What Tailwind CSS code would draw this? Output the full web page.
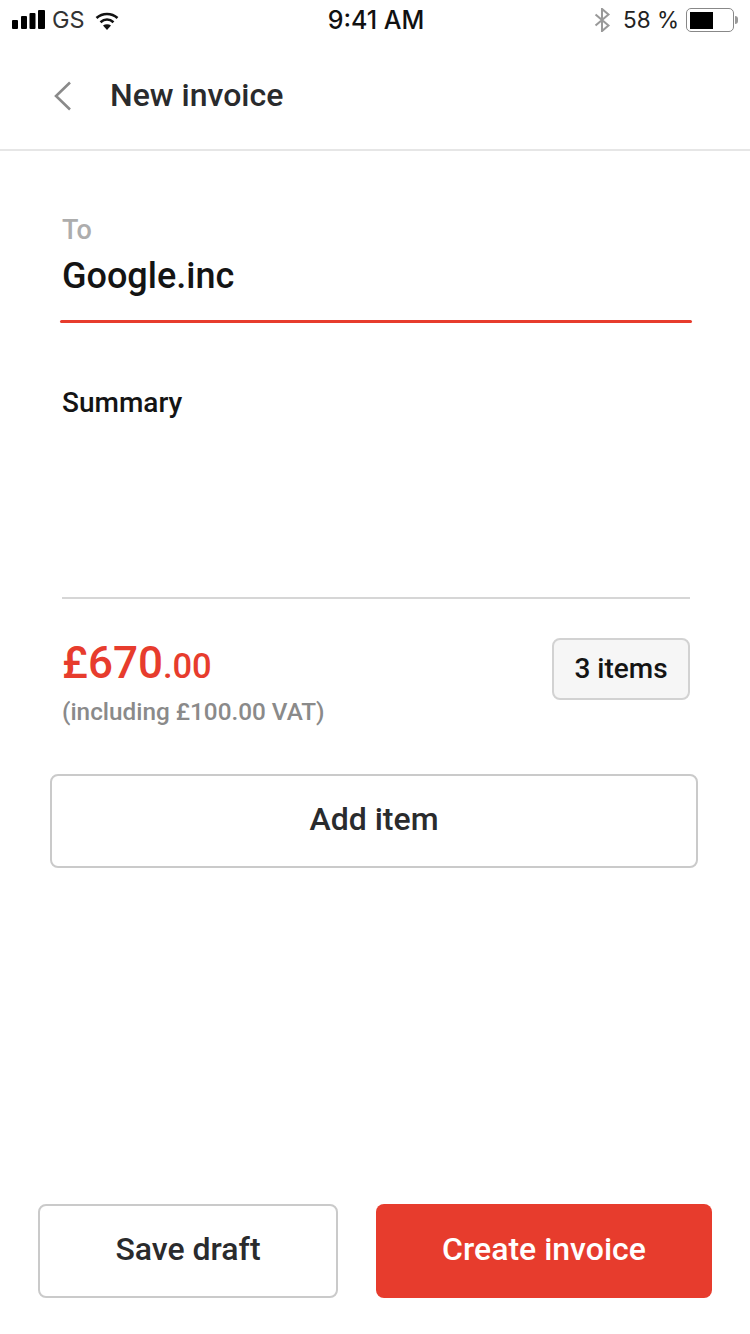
<!DOCTYPE html>
<html lang="en">

<head>
  <meta charset="UTF-8" />
  <meta name="viewport" content="width=device-width, initial-scale=1.0" />
  <title>New invoice</title>
  <script src="https://cdn.jsdelivr.net/npm/@tailwindcss/browser@4"></script>
</head>

<body class="bg-white font-['Roboto',sans-serif] w-[750px] h-[1334px] overflow-hidden flex flex-col">
  <!-- status bar -->
  <div class="h-[40px] pl-[12px] pr-[12px] grid grid-cols-[1fr_auto_1fr] items-center font-['Inter',sans-serif] text-[#111]">
    <div class="flex items-center">
      <svg width="33" height="20" viewBox="0 0 33 20" fill="#000">
        <rect x="0" y="10" width="6" height="9" rx="1" />
        <rect x="9" y="6" width="6" height="13" rx="1" />
        <rect x="17.500" y="3" width="6" height="16" rx="1" />
        <rect x="26" y="0" width="7" height="19" rx="1" />
      </svg>
      <span class="ml-[7px] text-[23.500px] text-[#333]">GS</span>
      <svg width="24" height="18" viewBox="0 0 24 18" fill="none" stroke="#111" stroke-width="2.600" class="ml-[10px] mt-[1px]">
        <path d="M1.500 6C7.500 .6 16.500 .6 22.500 6" />
        <path d="M5.500 10.200C9.500 6.800 14.500 6.800 18.500 10.200" />
        <path d="M12 18L8 13.600c2.300-1.700 5.700-1.700 8 0z" fill="#111" stroke="none" />
      </svg>
    </div>
    <div class="text-center text-[25px] font-medium pl-[2px] pt-[2px]">9:41 AM</div>
    <div class="flex items-center justify-end">
      <svg width="18" height="24" viewBox="0 0 18 26" fill="none" stroke="#999" stroke-width="2.200" class="ml-[1px]">
        <path d="M2 7l14 12-7 6V1l7 6L2 19" />
      </svg>
      <span class="text-[22.500px] ml-[12px] text-[#222]">58 %</span>
      <div class="ml-[7px] w-[48px] h-[24px] border-[1.500px] border-[#888] rounded-[5px] p-[2.500px]">
        <div class="w-[23px] h-full bg-black"></div>
      </div>
      <div class="w-[3px] h-[8px] bg-[#999] rounded-r-full ml-[1px]"></div>
    </div>
  </div>

  <!-- header -->
  <div class="h-[111px] border-b-2 border-[#e6e6e6] flex items-center pl-[54px] pt-[2px]">
    <svg width="18" height="30" viewBox="0 0 18 30" fill="none" stroke="#8a8a8a" stroke-width="2.600">
      <path d="M16 1.500L2 15l14 13.500" />
    </svg>
    <h1 class="ml-[38px] mb-[2px] text-[32px] font-[465] text-[#2a2b2d]">New invoice</h1>
  </div>

  <!-- form -->
  <div class="px-[60px] pt-[63px]">
    <div class="pl-[2px] text-[27px] leading-[32px] font-[465] text-[#adadad]">To</div>
    <div class="pl-[2px] mt-[9px] text-[36px] leading-[42px] font-[465] text-[#141414]">Google.inc</div>
    <div class="mt-[23px] w-[632px] h-[3px] bg-[#e73c2d] rounded-full"></div>
    <div class="pl-[2px] mt-[63px] text-[28px] leading-[34px] font-[465] text-[#141414]">Summary</div>
    <div class="ml-[2px] mt-[177px] w-[628px] h-[2px] bg-[#d6d6d6]"></div>
  </div>

  <div class="pl-[62px] pr-[60px] mt-[39px] flex justify-between items-start">
    <div>
      <div class="text-[#e73c2d] font-medium leading-[50px] text-[44px]">£670<span class="text-[34.500px] font-[465]">.00</span></div>
      <div class="mt-[5px] text-[24.300px] leading-[32px] font-[465] text-[#8a8a8a]">(including £100.00 VAT)</div>
    </div>
    <div class="w-[138px] h-[62px] bg-[#f6f6f6] border-2 border-[#d2d2d2] rounded-[8px] flex items-center justify-center text-[28px] font-[465] text-[#141414]">3 items</div>
  </div>

  <div class="mx-[50px] mt-[46px] w-[648px] h-[94px] border-2 border-[#cacaca] rounded-[8px] flex items-center justify-center pb-[4px] text-[32px] font-[465] text-[#2a2b2d]">Add item</div>

  <!-- actions -->
  <div class="mt-auto mb-[36px] px-[38px] flex gap-[38px]">
    <button class="w-[300px] h-[94px] border-2 border-[#cacaca] rounded-[8px] pb-[4px] text-[32px] font-[465] text-[#2a2b2d]">Save draft</button>
    <button class="w-[336px] h-[94px] bg-[#e73c2d] rounded-[8px] pb-[4px] text-[32px] font-[465] text-white">Create invoice</button>
  </div>
</body>

</html>
